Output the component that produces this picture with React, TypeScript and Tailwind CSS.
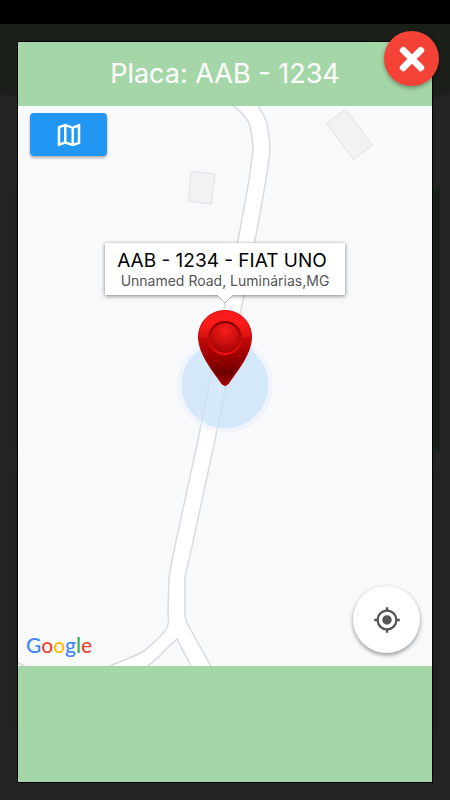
import { FaTimes } from "react-icons/fa";
import { MdMyLocation, MdOutlineMap } from "react-icons/md";

function RoadMap() {
  return (
    <svg
      className="absolute inset-0 size-full"
      viewBox="18 106 414 560"
      preserveAspectRatio="xMidYMid slice"
      role="img"
      aria-label="Mapa"
    >
      <rect x="-1000" y="-1000" width="3000" height="3000" fill="#f8f9fb" />
      <g fill="#f1f2f4" stroke="#e1e2e5" strokeWidth="1">
        <path d="M326.500 123.500 345.500 109 372.500 145 353.500 159.500Z" />
        <path d="M191 171.500 215 174 211.500 204 188.500 201Z" />
      </g>
      <path
        d="M226 102Q242 110 249 123Q253 137 253 151L249 180 240 230 198 440 172 560 169 577 168 615Q170 624 165 631Q154 643 144 651Q134 657 104 668L145 668Q160 657 165 650L177 639 192 668 212 668 188 625 185 617 185 577 189 560 215 440 257 230 266 180 270 152Q270 132 265 118L258 105"
        fill="#fff"
        stroke="#dadbdf"
        strokeWidth="1.500"
      />
      <path d="M17 662 28 668" stroke="#dadbdf" strokeWidth="1.500" />
      <circle cx="225" cy="385" r="48" fill="#e9f0fa" fillOpacity=".45" />
      <circle cx="225" cy="385" r="43.500" fill="#b9dcf9" fillOpacity=".5" />
    </svg>
  );
}

function Pin() {
  return (
    <svg className="h-[76px] w-[54px]" viewBox="0 0 54 76" aria-hidden="true">
      <defs>
        <linearGradient id="pinBody" x1="0" y1="0" x2="0" y2="1">
          <stop offset="0" stopColor="#f51a1a" />
          <stop offset=".15" stopColor="#ff1b1b" />
          <stop offset=".4" stopColor="#bd0808" />
          <stop offset=".62" stopColor="#9c0000" />
          <stop offset=".83" stopColor="#6f0000" />
          <stop offset="1" stopColor="#a50000" />
        </linearGradient>
        <radialGradient id="pinKnob" cx=".5" cy=".25" r=".75">
          <stop offset="0" stopColor="#fb1c1c" />
          <stop offset="1" stopColor="#a50505" />
        </radialGradient>
        <linearGradient id="pinRing" x1="0" y1="0" x2="0" y2="1">
          <stop offset="0" stopColor="#880000" />
          <stop offset=".5" stopColor="#bd0909" />
          <stop offset="1" stopColor="#f01010" />
        </linearGradient>
        <linearGradient id="pinEdge" x1="0" y1="0" x2="0" y2="1">
          <stop offset="0" stopColor="#d40d0d" />
          <stop offset="1" stopColor="#b00000" />
        </linearGradient>
      </defs>
      <path
        d="M27 .5C12 .5 .5 12 .5 27C.5 44 15 61 24 74Q27 77 30 74C39 61 53.500 44 53.500 27C53.500 12 42 .5 27 .5Z"
        fill="url(#pinBody)"
        stroke="url(#pinEdge)"
      />
      <path
        d="M2 26C2 12 13 2 27 2S52 12 52 26Q47 28 43 27A16 16 0 0 0 11 27Q7 28 2 26Z"
        fill="#ff2020"
        fillOpacity=".35"
      />
      <circle cx="27" cy="28" r="16" fill="#a90808" stroke="url(#pinRing)" strokeWidth="2" />
      <circle cx="27" cy="28" r="14.500" fill="url(#pinKnob)" />
    </svg>
  );
}

function GoogleMark() {
  return (
    <a
      href="#google"
      aria-label="Google"
      className="font-['Lato',sans-serif] text-[21px] leading-6 font-medium [text-shadow:0_0_2px_white]"
    >
      <span className="text-[#4285f4]">G</span>
      <span className="text-[#ea4335]">o</span>
      <span className="text-[#fbbc05]">o</span>
      <span className="text-[#4285f4]">g</span>
      <span className="text-[#34a853]">l</span>
      <span className="text-[#ea4335]">e</span>
    </a>
  );
}

function Backdrop() {
  return (
    <div className="absolute inset-0 flex flex-col bg-[#242424]" aria-hidden="true">
      <div className="h-6 bg-black" />
      <div className="h-[68px] bg-[#1a1f1a] shadow-[0_2px_5px_#1a1a1a]" />
      <div className="mx-[10px] mt-[95px] h-[264px] bg-[linear-gradient(90deg,#222_50%,#19211a_50%)]" />
      <div className="mx-[10px] mt-5 h-[262px] bg-[#222222]" />
    </div>
  );
}

export default function App() {
  return (
    <div className="relative flex min-h-screen flex-col font-['Inter','Liberation_Sans',sans-serif]">
      <Backdrop />
      <main
        role="dialog"
        aria-labelledby="plate"
        className="relative mx-[18px] mt-[42px] mb-[18px] flex flex-1 flex-col bg-[#a5d6a7] outline outline-black"
      >
        <header className="flex h-16 items-center justify-center">
          <h1 id="plate" className="text-[27px] leading-8 text-white">
            Placa: AAB - 1234
          </h1>
        </header>
        <button
          type="button"
          aria-label="Fechar"
          className="absolute -top-[11px] -right-[7px] z-10 flex size-[55px] items-center justify-center rounded-full bg-[#f44336] text-white shadow-[0_2px_4px_rgba(0,0,0,0.35)]"
        >
          <FaTimes className="size-9" />
        </button>

        <section className="relative flex min-h-[560px] flex-1 flex-col justify-between overflow-hidden">
          <RoadMap />
          <div className="relative px-3 pt-[7px]">
            <button
              type="button"
              aria-label="Tipo de mapa"
              className="flex h-[43px] w-[77px] items-center justify-center rounded bg-[#2196f3] text-white shadow-[0_2px_3px_rgba(0,0,0,0.3)]"
            >
              <MdOutlineMap className="size-[30px]" />
            </button>
          </div>

          <div className="absolute top-1/2 left-1/2 flex -translate-x-1/2 -translate-y-full flex-col items-center">
            <div className="relative flex h-[52px] w-60 flex-col items-center bg-white pt-1 whitespace-nowrap shadow-[0_1px_4px_rgba(0,0,0,0.5)]">
              <strong className="pr-[6px] text-[19px] leading-7 font-normal text-black">
                AAB - 1234 - FIAT UNO
              </strong>
              <span className="text-sm leading-3 text-[#555]">
                Unnamed Road, Luminárias,MG
              </span>
            </div>
            <svg className="relative h-2 w-4" viewBox="0 0 16 8" aria-hidden="true">
              <path d="M0 0H16L8 8Z" fill="#fff" />
              <path d="M0 0 8 8 16 0" fill="none" stroke="#b5b5b5" />
            </svg>
            <div className="mt-[7px]">
              <Pin />
            </div>
          </div>

          <div className="relative flex items-end justify-between pr-3 pb-[13px] pl-2">
            <div className="-mb-1 flex">
              <GoogleMark />
            </div>
            <button
              type="button"
              aria-label="Minha localização"
              className="flex size-[67px] items-center justify-center rounded-full bg-white text-[#555] shadow-[0_2px_4px_rgba(0,0,0,0.4)]"
            >
              <MdMyLocation className="size-7" />
            </button>
          </div>
        </section>

        <footer className="h-[116px]" />
      </main>
    </div>
  );
}
